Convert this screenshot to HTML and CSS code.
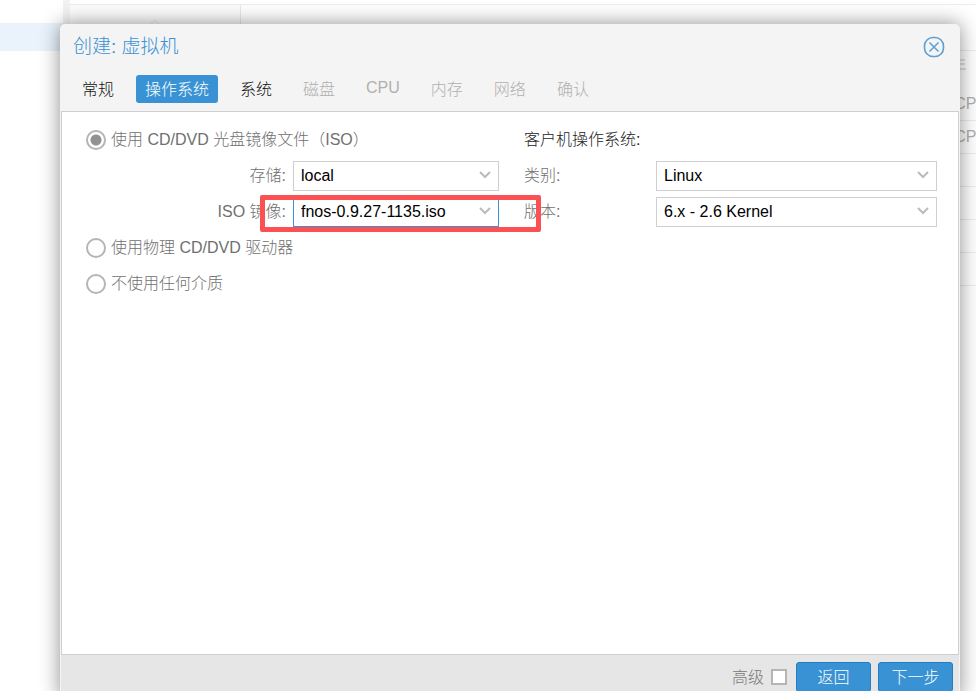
FILE: index.html
```html
<!DOCTYPE html>
<html lang="zh-CN">
<head>
  <meta charset="UTF-8" />
  <meta name="viewport" content="width=device-width, initial-scale=1.0" />
  <title>创建: 虚拟机</title>
  <link rel="stylesheet" href="styles.css">
</head>
<body>
  <div class="workspace">
    <div class="tree"><div class="tree-selected"></div></div>
    <div class="splitter"></div>
    <div class="panel">
      <div class="panel-menu">
        <svg class="scroll-up" width="20" height="10" viewBox="0 0 20 10"><path d="M1 10 10 1l9 9" fill="none" stroke="#f0f0f0" stroke-width="1.5"/></svg>
      </div>
      <div class="panel-log">
        <div class="log-row log-head"></div>
        <div class="log-row log-tools">
          <svg width="8" height="14" viewBox="0 0 8 14"><path d="M0 2h6M1 6h5M0 11h7" fill="none" stroke="#cfdcda" stroke-width="1.5"/></svg>
        </div>
        <div class="log-row">CPU</div>
        <div class="log-row">CPU</div>
        <div class="log-row"></div>
        <div class="log-row"></div>
        <div class="log-row"></div>
        <div class="log-row"></div>
      </div>
    </div>
  </div>

  <div class="dialog" role="dialog" aria-labelledby="dialog-title">
    <div class="dialog-header">
      <h1 class="dialog-title" id="dialog-title">创建: 虚拟机</h1>
      <button class="close" aria-label="关闭">
        <svg width="22" height="22" viewBox="0 0 22 22" fill="none" stroke="#5a9fd6">
          <rect x="1.5" y="1.5" width="19" height="19" rx="8.5" stroke-width="1.6"/>
          <path d="M6.5 6.5l9 9M15.5 6.5l-9 9" stroke-width="1.5"/>
        </svg>
      </button>
    </div>

    <div class="tabs">
      <button class="tab">常规</button>
      <button class="tab active">操作系统</button>
      <button class="tab">系统</button>
      <button class="tab" disabled>磁盘</button>
      <button class="tab" disabled>CPU</button>
      <button class="tab" disabled>内存</button>
      <button class="tab" disabled>网络</button>
      <button class="tab" disabled>确认</button>
    </div>

    <form class="dialog-body" id="wizard">
      <div class="column">
        <div class="row radio-row">
          <input type="radio" name="media" id="media-iso" checked>
          <label for="media-iso">使用 CD/DVD 光盘镜像文件（ISO）</label>
        </div>
        <div class="row">
          <label class="wide-label" for="storage">存储:</label>
          <div class="combo">
            <select id="storage"><option>local</option></select>
            <svg class="arrow" width="12" height="8" viewBox="0 0 12 8"><path d="M1 1l5 5 5-5"/></svg>
          </div>
        </div>
        <div class="row iso-row">
          <label class="wide-label" for="iso">ISO 镜像:</label>
          <div class="combo focused">
            <select id="iso"><option>fnos-0.9.27-1135.iso</option></select>
            <svg class="arrow" width="12" height="8" viewBox="0 0 12 8"><path d="M1 1l5 5 5-5"/></svg>
          </div>
          <div class="highlight"></div>
        </div>
        <div class="row radio-row">
          <input type="radio" name="media" id="media-cdrom">
          <label for="media-cdrom">使用物理 CD/DVD 驱动器</label>
        </div>
        <div class="row radio-row">
          <input type="radio" name="media" id="media-none">
          <label for="media-none">不使用任何介质</label>
        </div>
      </div>

      <div class="column">
        <div class="row section-title">客户机操作系统:</div>
        <div class="row">
          <label class="narrow-label" for="ostype">类别:</label>
          <div class="combo">
            <select id="ostype"><option>Linux</option></select>
            <svg class="arrow" width="12" height="8" viewBox="0 0 12 8"><path d="M1 1l5 5 5-5"/></svg>
          </div>
        </div>
        <div class="row">
          <label class="narrow-label" for="version">版本:</label>
          <div class="combo">
            <select id="version"><option>6.x - 2.6 Kernel</option></select>
            <svg class="arrow" width="12" height="8" viewBox="0 0 12 8"><path d="M1 1l5 5 5-5"/></svg>
          </div>
        </div>
      </div>
    </form>

    <div class="dialog-footer">
      <label for="advanced">高级</label>
      <input type="checkbox" id="advanced">
      <button class="action">返回</button>
      <button class="action">下一步</button>
    </div>
  </div>
</body>
</html>
```
FILE: styles.css
```css
* {
  box-sizing: border-box;
}
body {
  margin: 0;
  height: 100vh;
  overflow: hidden;
  position: relative;
  background: #fff;
  color: #111;
  font-family: "Liberation Sans", "Noto Sans CJK SC", sans-serif;
  font-size: 16px;
  font-weight: 300;
}
button, select, input {
  font: inherit;
  margin: 0;
}

/* page behind the dialog */
.workspace {
  display: flex;
  height: 100%;
}
.tree {
  width: 63px;
  padding-top: 23px;
}
.tree-selected {
  height: 28px;
  background: #eaf3fc;
}
.splitter {
  width: 7px;
  background: #f2f2f2;
}
.panel {
  flex: 1;
  display: flex;
  margin-top: 4px;
  border-top: 1px solid #ececec;
}
.panel-menu {
  width: 171px;
  padding-top: 10px;
  background: #fcfcfc;
  border-right: 1px solid #e8e8e8;
  text-align: center;
}
.panel-log {
  flex: 1;
  color: #b0b0b0;
}
.log-row {
  height: 33px;
  padding-right: 2px;
  border-bottom: 1px solid #ececec;
  line-height: 32px;
  text-align: right;
  margin-right: -14px;
}
.log-head {
  height: 46px;
}
.log-tools {
  height: 37px;
  padding-right: 23px;
  border-bottom: none;
}

/* dialog */
.dialog {
  position: absolute;
  top: 24px;
  right: 16px;
  bottom: -8px;
  left: 60px;
  display: flex;
  flex-direction: column;
  padding: 0 1px;
  background: #f4f4f4;
  border-radius: 5px;
  box-shadow: 0 0 20px rgba(0, 0, 0, 0.45);
}
.dialog-header {
  display: flex;
  align-items: center;
  justify-content: space-between;
  height: 45px;
  padding: 0 14px 0 12px;
}
.dialog-title {
  margin: 0;
  padding-bottom: 4px;
  color: #3892d4;
  font-size: 19px;
  font-weight: 300;
}
.close {
  display: flex;
  padding: 0;
  border: none;
  background: none;
}
.tabs {
  display: flex;
  gap: 13px;
  padding: 6px 12px 8px;
}
.tab {
  height: 28px;
  padding: 0 9px 2px;
  border: none;
  border-radius: 3px;
  background: none;
  color: #111;
}
.tab:disabled {
  color: #b0b0b0;
}
.tab.active {
  background: #3892d4;
  color: #fff;
}
.dialog-body {
  flex: 1;
  display: grid;
  grid-template-columns: 1fr 1fr;
  align-items: start;
  gap: 25px;
  padding: 13px 21px 13px 24px;
  background: #fff;
  border: 1px solid #cfcfcf;
}
.column {
  display: grid;
  gap: 6px;
}
.row {
  display: flex;
  align-items: center;
  gap: 7px;
  height: 30px;
  color: #707070;
}
.row label {
  padding-bottom: 4px;
}
.radio-row {
  gap: 5px;
}
.section-title {
  padding-bottom: 4px;
  color: #222;
}
.wide-label {
  width: 200px;
  text-align: right;
}
.narrow-label {
  width: 125px;
}
.combo {
  flex: 1;
  position: relative;
}
.combo select {
  display: block;
  width: 100%;
  height: 30px;
  padding: 0 30px 2px 7px;
  border: 1px solid #cfcfcf;
  border-radius: 0;
  background: #fff;
  color: #000;
  appearance: none;
}
.combo.focused select {
  border-color: #3892d4;
}
.arrow {
  position: absolute;
  top: 10px;
  right: 8px;
  fill: none;
  stroke: #bbb;
  stroke-width: 2;
  pointer-events: none;
}
input[type="radio"] {
  width: 20px;
  height: 20px;
  border: 2px solid #b5b5b5;
  border-radius: 50%;
  background: #fff;
  appearance: none;
}
input[type="radio"]:checked {
  background: radial-gradient(circle, #929292 5px, #fff 6px);
}
.iso-row {
  position: relative;
}
.highlight {
  position: absolute;
  top: -2px;
  right: -42px;
  left: 174px;
  height: 37px;
  border: 5px solid #fb5152;
  border-radius: 2px;
  z-index: 1;
  pointer-events: none;
}
.dialog-footer {
  display: flex;
  align-items: center;
  justify-content: flex-end;
  gap: 7px;
  height: 44px;
  padding: 0 6px;
  background: #e6e6e6;
  color: #777;
}
.dialog-footer label {
  padding-bottom: 2px;
}
input[type="checkbox"] {
  width: 16px;
  height: 16px;
  margin-right: 2px;
  border: 2px solid #b5b5b5;
  background: #fff;
  appearance: none;
}
.action {
  width: 75px;
  height: 30px;
  padding: 0 0 2px;
  border: 1px solid #217dc4;
  border-radius: 3px;
  background: #3892d4;
  color: #fff;
}
```
